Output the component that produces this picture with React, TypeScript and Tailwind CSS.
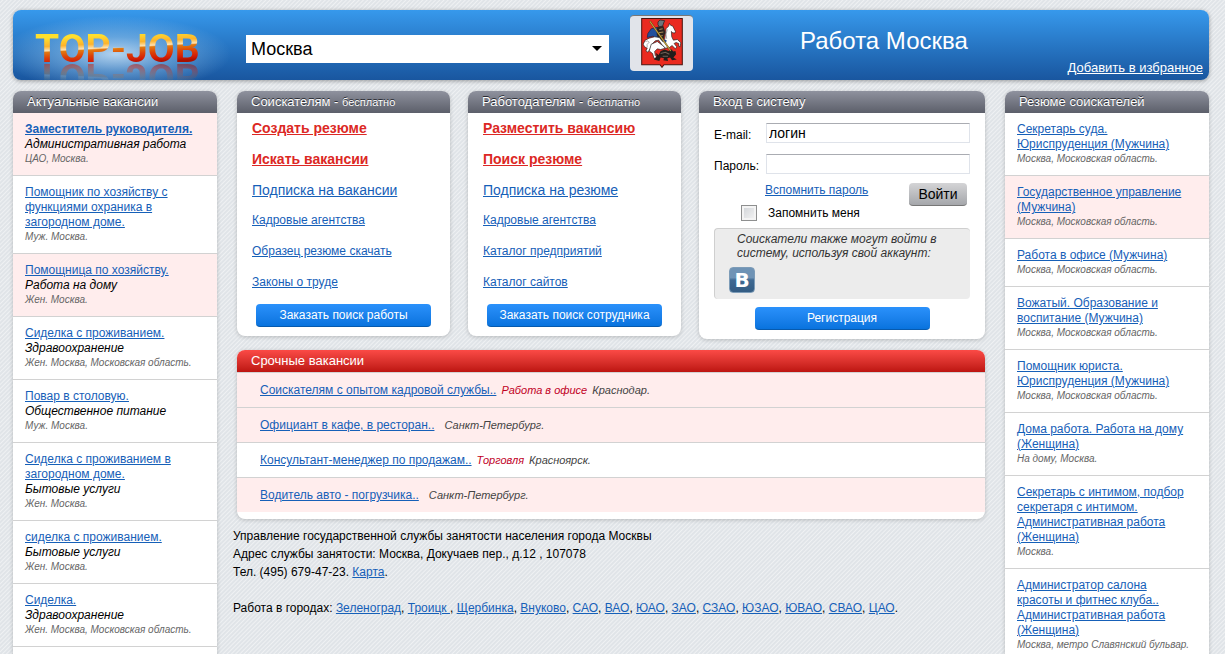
import { useState } from "react";
import type { ReactNode } from "react";

type Vacancy = {
  title: string;
  category?: string;
  place: string;
  hot?: boolean;
  bold?: boolean;
};

const VACANCIES: Vacancy[] = [
  { title: "Заместитель руководителя.", category: "Административная работа", place: "ЦАО, Москва.", hot: true, bold: true },
  { title: "Помощник по хозяйству с функциями охраника в загородном доме.", place: "Муж. Москва." },
  { title: "Помощница по хозяйству.", category: "Работа на дому", place: "Жен. Москва.", hot: true },
  { title: "Сиделка с проживанием.", category: "Здравоохранение", place: "Жен. Москва, Московская область." },
  { title: "Повар в столовую.", category: "Общественное питание", place: "Муж. Москва." },
  { title: "Сиделка с проживанием в загородном доме.", category: "Бытовые услуги", place: "Жен. Москва." },
  { title: "сиделка с проживанием.", category: "Бытовые услуги", place: "Жен. Москва." },
  { title: "Сиделка.", category: "Здравоохранение", place: "Жен. Москва, Московская область." },
];

const RESUMES: Vacancy[] = [
  { title: "Секретарь суда. Юриспруденция (Мужчина)", place: "Москва, Московская область." },
  { title: "Государственное управление (Мужчина)", place: "Москва, Московская область.", hot: true },
  { title: "Работа в офисе (Мужчина)", place: "Москва, Московская область." },
  { title: "Вожатый. Образование и воспитание (Мужчина)", place: "Москва, Московская область." },
  { title: "Помощник юриста. Юриспруденция (Мужчина)", place: "Москва, Московская область." },
  { title: "Дома работа. Работа на дому (Женщина)", place: "На дому, Москва." },
  { title: "Секретарь с интимом, подбор секретаря с интимом. Административная работа (Женщина)", place: "Москва." },
  { title: "Администратор салона красоты и фитнес клуба.. Административная работа (Женщина)", place: "Москва, метро Славянский бульвар." },
];

const URGENT = [
  { title: "Соискателям с опытом кадровой службы..", category: "Работа в офисе", place: "Краснодар.", hot: true },
  { title: "Официант в кафе, в ресторан..", place: "Санкт-Петербург.", hot: true },
  { title: "Консультант-менеджер по продажам..", category: "Торговля", place: "Красноярск.", hot: false },
  { title: "Водитель авто - погрузчика..", place: "Санкт-Петербург.", hot: true },
];

const CITIES = ["Зеленоград", "Троицк ", "Щербинка", "Внуково", "САО", "ВАО", "ЮАО", "ЗАО", "СЗАО", "ЮЗАО", "ЮВАО", "СВАО", "ЦАО"];

const SEEKER_LINKS = ["Создать резюме", "Искать вакансии", "Подписка на вакансии", "Кадровые агентства", "Образец резюме скачать", "Законы о труде"];
const EMPLOYER_LINKS = ["Разместить вакансию", "Поиск резюме", "Подписка на резюме", "Кадровые агентства", "Каталог предприятий", "Каталог сайтов"];

function Logo() {
  return (
    <div className="h-[70px] w-[233px] shrink-0 overflow-hidden rounded-l-lg bg-[radial-gradient(115px_38px_at_103px_44px,rgba(216,236,251,0.8),rgba(156,202,238,0.5)_45%,rgba(90,160,220,0))] pt-5 pl-[22px]">
      <span className="inline-block bg-[linear-gradient(177deg,#ffe02e_18%,#fdb32c_36%,#fde3b4_45%,#e27a10_48%,#dc4208_60%,#d41c04_72%,#a81000_80%)] bg-clip-text font-[Roboto,sans-serif] text-[39px] leading-[39px] font-bold text-transparent [-webkit-box-reflect:below_-12px_linear-gradient(transparent_35%,rgba(0,0,0,0.55)_85%)]">
        TOP-JOB
      </span>
    </div>
  );
}

function Emblem() {
  return (
    <svg viewBox="40 18 124 149" className="h-[50px] w-[42px]" role="img" aria-label="Герб Москвы">
      <path d="M41.500 19.500H162.500V157H108L102 165L96 157H41.500Z" fill="#ea2a20" stroke="#4a1410" strokeWidth="3" />
      {/* rider */}
      <path d="M88 46L70 50L60 64L58 76L76 72L84 84L96 72Z" fill="#22509c" stroke="#15254a" strokeWidth="2" />
      <path d="M88 44L106 42L112 60L106 84L114 100L104 104L92 84L86 66Z" fill="#2d2420" />
      <path d="M90 30L96 24L110 26L108 30L104 42L94 44L90 38Z" fill="#6f767c" stroke="#1d1d1d" strokeWidth="2" />
      <path d="M94 52L104 50M92 62L106 60M96 72L104 70" stroke="#a88a58" strokeWidth="3" />
      {/* horse */}
      <path
        d="M114 50L122 42L124 34L128 40L134 42L142 58L140 63L134 62L130 58L131 74L136 84L148 82L158 92L156 104L152 102L152 94L144 91L138 94L146 104L142 110L132 100L124 106L112 108L102 98L92 84L82 86L74 94L68 108L60 120L54 116L58 108L50 104L46 96L52 84L64 78L80 74L94 76L104 88L110 82L112 68Z"
        fill="#fff"
        stroke="#222"
        strokeWidth="2"
      />
      <path d="M70 96L88 88L104 100L112 108L98 112L88 110L80 118L82 130L90 138L78 138L74 124L64 116Z" fill="#fff" stroke="#222" strokeWidth="2" />
      <path d="M118 52L114 66L116 80M52 88Q60 84 64 90Q54 96 58 106" fill="none" stroke="#888" strokeWidth="2" />
      <path d="M102 80L116 84L114 92L106 90Z" fill="#274f96" />
      {/* dragon */}
      <path
        d="M78 142L86 132L84 122L92 128L98 116L110 112L122 116L128 110L136 118L142 116L144 126L136 136L146 142L132 144L126 136L118 138L120 146L106 144L108 138L98 136L94 146Z"
        fill="#221d1b"
      />
      <path d="M98 124L112 120L124 126M104 132L120 132" stroke="#6d6257" strokeWidth="3" fill="none" />
      <path d="M66 28L128 116" stroke="#4a3a12" strokeWidth="5" />
      <path d="M66 28L128 116" stroke="#c2a340" strokeWidth="3" />
    </svg>
  );
}

function Panel({ title, note, tone = "gray", children }: { title: string; note?: string; tone?: "gray" | "red"; children: ReactNode }) {
  return (
    <section className="overflow-hidden rounded-lg bg-white shadow-[0_1px_4px_rgba(0,0,0,0.2)]">
      <h2
        className={
          tone === "red"
            ? "h-[22px] bg-linear-to-b from-[#fb4a46] to-[#bd1410] px-3.5 text-[13px] leading-[22px] text-white"
            : "h-[22px] bg-linear-to-b from-[#8f929e] to-[#5c5f6a] px-3.5 text-[13px] leading-[22px] text-white [text-shadow:0_-1px_0_#2a2c33]"
        }
      >
        {title}
        {note && <> - <small className="text-[11px]">{note}</small></>}
      </h2>
      {children}
    </section>
  );
}

function JobList({ items }: { items: Vacancy[] }) {
  return (
    <ul>
      {items.map((item) => (
        <li
          key={item.title}
          className={`border-b border-[#d2d2d2] py-[9px] pr-4 pl-3 leading-[15px] ${item.hot ? "bg-[#ffeded]" : "bg-white"}`}
        >
          <a href="#" className={`text-[#1660b8] underline ${item.bold ? "font-bold" : ""}`}>
            {item.title}
          </a>
          {item.category && <p className="italic">{item.category}</p>}
          <p className="text-[10px] leading-[14px] whitespace-nowrap text-[#666] italic">{item.place}</p>
        </li>
      ))}
    </ul>
  );
}

function BlueButton({ children }: { children: ReactNode }) {
  return (
    <button
      type="button"
      className="mx-auto block h-[23px] w-[175px] rounded-[4px] border-b border-[#075aae] bg-linear-to-b from-[#2a91fb] to-[#0873de] text-xs leading-[22px] text-white"
    >
      {children}
    </button>
  );
}

function LinkPanel({ title, links, action }: { title: string; links: string[]; action: string }) {
  return (
    <Panel title={title} note="бесплатно">
      <ul className="px-[15px]">
        {links.map((link, i) => (
          <li key={link} className={i < 3 ? "h-[31px] text-sm leading-[30px]" : "h-[31px] leading-[28px]"}>
            <a href="#" className={i < 2 ? "font-bold text-[#dc2824] underline" : "text-[#1660b8] underline"}>
              {link}
            </a>
          </li>
        ))}
      </ul>
      <div className="pt-[5px] pb-[9px]">
        <BlueButton>{action}</BlueButton>
      </div>
    </Panel>
  );
}

function LoginPanel() {
  const [login, setLogin] = useState("логин");
  const [password, setPassword] = useState("");
  const field = "h-5 min-w-0 flex-1 border border-[#dfe3ea] border-t-[#aaacb2] bg-white px-0.5 text-sm leading-4";

  return (
    <Panel title="Вход в систему">
      <form className="px-[15px] pt-2.5 pb-[9px]" onSubmit={(e) => e.preventDefault()}>
        <div className="flex items-center">
          <label htmlFor="email" className="w-[52px] shrink-0 pt-1">E-mail:</label>
          <input id="email" className={field} value={login} onChange={(e) => setLogin(e.target.value)} />
        </div>
        <div className="mt-[11px] flex items-center">
          <label htmlFor="password" className="w-[52px] shrink-0 pt-1">Пароль:</label>
          <input id="password" type="password" className={field} value={password} onChange={(e) => setPassword(e.target.value)} />
        </div>
        <div className="flex justify-between pt-[9px] pr-[3px]">
          <div>
            <a href="#" className="ml-[51px] block leading-[15px] text-[#1660b8] underline">Вспомнить пароль</a>
            <label className="mt-[7px] ml-[27px] flex items-center gap-[11px]">
              <input
                type="checkbox"
                className="size-4 appearance-none border border-[#8e8f8f] bg-linear-to-br from-[#cfd2d6] to-[#f6f6f6] shadow-[inset_0_0_0_2px_#f4f4f4] checked:bg-[#1660b8]"
              />
              Запомнить меня
            </label>
          </div>
          <button
            type="submit"
            className="h-[23px] w-[58px] rounded-[4px] border-b border-[#777] bg-linear-to-b from-[#d4d4d6] to-[#a5a7ab] text-sm leading-[22px] text-black"
          >
            Войти
          </button>
        </div>
        <div className="mt-[7px] h-[71px] rounded border-t border-l border-[#cfcfcf] bg-[#ececec] px-3.5 pt-[3px]">
          <p className="pl-2 leading-[14px] text-[#333] italic">Соискатели также могут войти в систему, используя свой аккаунт:</p>
          <button
            type="button"
            aria-label="Войти через ВКонтакте"
            className="mt-[7px] flex size-[26px] items-center justify-center rounded border border-[#7d9cb8] bg-linear-to-b from-[#6f93b5] from-40% via-[#3f6a93] via-50% to-[#335c83] font-['DejaVu_Sans',sans-serif] text-xl leading-none font-bold text-white"
          >
            B
          </button>
        </div>
        <div className="pt-2">
          <BlueButton>Регистрация</BlueButton>
        </div>
      </form>
    </Panel>
  );
}

export default function App() {
  const [city, setCity] = useState("Москва");

  return (
    <div className="h-screen overflow-hidden bg-[#e4e7ea] bg-[repeating-linear-gradient(135deg,#e0e4e8_0px,#e0e4e8_1px,#eff1f3_2px,#e0e4e8_3px)] pt-2.5 pr-4 pl-[13px] font-['Liberation_Sans',Arial,sans-serif] text-xs text-black">
      {/* Header */}
      <header className="flex h-[70px] items-start rounded-lg bg-linear-to-b from-[#3799ec] to-[#19569f] shadow-[0_1px_4px_rgba(0,0,0,0.35)]">
        <Logo />
        <div className="relative mt-[25px] w-[363px]">
          <select
            aria-label="Город"
            value={city}
            onChange={(e) => setCity(e.target.value)}
            className="h-7 w-full appearance-none bg-white px-[5px] text-lg leading-7"
          >
            <option>Москва</option>
            <option>Санкт-Петербург</option>
          </select>
          <span className="pointer-events-none absolute top-[11px] right-[7px] border-x-[5px] border-t-[5px] border-x-transparent border-t-black" />
        </div>
        <div className="mt-[5px] ml-[21px] flex h-14 w-[63px] justify-center rounded border-t border-[#777] bg-[#e1e4ea] pt-0.5">
          <Emblem />
        </div>
        <div className="flex flex-1 flex-col self-stretch pr-1.5">
          <h1 className="mt-4 ml-[107px] text-2xl leading-[30px] text-white">Работа Москва</h1>
          <a href="#" className="mt-1 self-end text-[13px] leading-4 text-white underline">Добавить в избранное</a>
        </div>
      </header>

      <div className="mt-[11px] grid grid-cols-[204px_minmax(0,1fr)_204px] gap-5">
        <Panel title="Актуальные вакансии">
          <JobList items={VACANCIES} />
        </Panel>

        <main>
          <div className="grid grid-cols-[213fr_213fr_286fr] items-start gap-[18px]">
            <LinkPanel title="Соискателям" links={SEEKER_LINKS} action="Заказать поиск работы" />
            <LinkPanel title="Работодателям" links={EMPLOYER_LINKS} action="Заказать поиск сотрудника" />
            <LoginPanel />
          </div>

          <div className="mt-[11px]">
            <Panel title="Срочные вакансии" tone="red">
              <ul className="pb-[7px]">
                {URGENT.map((job) => (
                  <li
                    key={job.title}
                    className={`h-[35px] border-t border-[#d2d2d2] pl-[23px] leading-[34px] ${job.hot ? "bg-[#ffeded]" : "bg-white"}`}
                  >
                    <a href="#" className="text-[#1660b8] underline">{job.title}</a>
                    <span className="ml-[5px] text-[11px] text-[#c1001f] italic">{job.category}</span>
                    <span className="ml-[5px] text-[11px] text-[#444] italic">{job.place}</span>
                  </li>
                ))}
              </ul>
            </Panel>
          </div>

          <footer className="-ml-1 pt-2 leading-[18px]">
            <p>Управление государственной службы занятости населения города Москвы</p>
            <p>Адрес службы занятости: Москва, Докучаев пер., д.12 , 107078</p>
            <p>Тел. (495) 679-47-23. <a href="#" className="text-[#1660b8] underline">Карта</a>.</p>
            <p className="mt-[18px]">
              Работа в городах:{" "}
              {CITIES.map((name, i) => (
                <span key={name}>
                  <a href="#" className="whitespace-pre text-[#1660b8] underline">{name}</a>
                  {i < CITIES.length - 1 ? ", " : "."}
                </span>
              ))}
            </p>
          </footer>
        </main>

        <Panel title="Резюме соискателей">
          <JobList items={RESUMES} />
        </Panel>
      </div>
    </div>
  );
}
